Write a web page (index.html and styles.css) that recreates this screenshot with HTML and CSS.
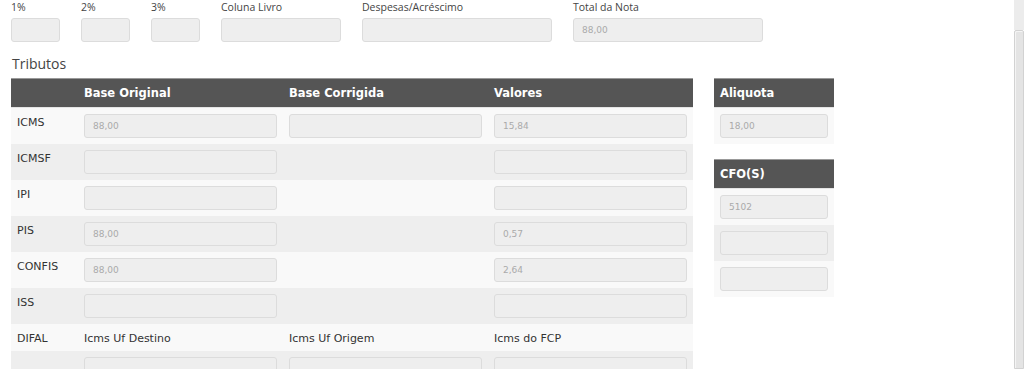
FILE: index.html
```html
<!DOCTYPE html>
<html lang="pt-BR">
<head>
  <meta charset="UTF-8">
  <title>Tributos</title>
  <meta name="viewport" content="width=device-width, initial-scale=1.0">
<link rel="stylesheet" href="styles.css">
</head>
<body>
  <div class="page">
    <div class="content">
      <div class="totais">
        <div class="campo w1">
          <label>1%</label>
          <input type="text" disabled>
        </div>
        <div class="campo w1">
          <label>2%</label>
          <input type="text" disabled>
        </div>
        <div class="campo w1">
          <label>3%</label>
          <input type="text" disabled>
        </div>
        <div class="campo w2">
          <label>Coluna Livro</label>
          <input type="text" disabled>
        </div>
        <div class="campo w3">
          <label>Despesas/Acréscimo</label>
          <input type="text" disabled>
        </div>
        <div class="campo w3">
          <label>Total da Nota</label>
          <input type="text" value="88,00" disabled>
        </div>
      </div>

      <h3 class="titulo">Tributos</h3>

      <div class="tributos">
        <table class="grade">
          <colgroup>
            <col class="c-label">
            <col class="c-campo">
            <col class="c-campo">
            <col class="c-campo">
          </colgroup>
          <thead>
            <tr>
              <th></th>
              <th>Base Original</th>
              <th>Base Corrigida</th>
              <th>Valores</th>
            </tr>
          </thead>
          <tbody>
            <tr>
              <td class="nome">ICMS</td>
              <td><input type="text" value="88,00" disabled></td>
              <td><input type="text" disabled></td>
              <td><input type="text" value="15,84" disabled></td>
            </tr>
            <tr>
              <td class="nome">ICMSF</td>
              <td><input type="text" disabled></td>
              <td></td>
              <td><input type="text" disabled></td>
            </tr>
            <tr>
              <td class="nome">IPI</td>
              <td><input type="text" disabled></td>
              <td></td>
              <td><input type="text" disabled></td>
            </tr>
            <tr>
              <td class="nome">PIS</td>
              <td><input type="text" value="88,00" disabled></td>
              <td></td>
              <td><input type="text" value="0,57" disabled></td>
            </tr>
            <tr>
              <td class="nome">CONFIS</td>
              <td><input type="text" value="88,00" disabled></td>
              <td></td>
              <td><input type="text" value="2,64" disabled></td>
            </tr>
            <tr>
              <td class="nome">ISS</td>
              <td><input type="text" disabled></td>
              <td></td>
              <td><input type="text" disabled></td>
            </tr>
            <tr class="sub">
              <td class="nome">DIFAL</td>
              <td>Icms Uf Destino</td>
              <td>Icms Uf Origem</td>
              <td>Icms do FCP</td>
            </tr>
            <tr>
              <td class="nome"></td>
              <td><input type="text" disabled></td>
              <td><input type="text" disabled></td>
              <td><input type="text" disabled></td>
            </tr>
          </tbody>
        </table>

        <div class="lateral">
          <table class="grade caixa">
            <thead>
              <tr><th>Aliquota</th></tr>
            </thead>
            <tbody>
              <tr><td><input type="text" value="18,00" disabled></td></tr>
            </tbody>
          </table>

          <table class="grade caixa">
            <thead>
              <tr><th>CFO(S)</th></tr>
            </thead>
            <tbody>
              <tr><td><input type="text" value="5102" disabled></td></tr>
              <tr><td><input type="text" disabled></td></tr>
              <tr><td><input type="text" disabled></td></tr>
            </tbody>
          </table>
        </div>
      </div>
    </div>

    <div class="rolagem">
      <div class="trilho"></div>
      <div class="barra"></div>
    </div>
  </div>
</body>
</html>
```

FILE: styles.css
```css
html,
body {
  margin: 0;
  padding: 0;
  height: 100%;
  overflow: hidden;
  background-color: #fff;
}

body {
  font-family: "DejaVu Sans", Verdana, sans-serif;
  font-size: 11px;
  color: #333;
}

.page {
  display: flex;
  height: 100%;
}

.content {
  flex: 1;
  padding: 0 11px;
}

input[type="text"] {
  display: block;
  width: 100%;
  height: 24px;
  box-sizing: border-box;
  margin: 0;
  padding: 0 8px;
  border: 1px solid #dcdcdc;
  border-radius: 3px;
  background-color: #eee;
  font-family: "DejaVu Sans", Verdana, sans-serif;
  font-size: 9px;
  color: #aaa;
  -webkit-text-fill-color: #aaa;
  opacity: 1;
}

/* campos do topo */
.totais {
  display: flex;
  gap: 21px;
}

.campo label {
  display: block;
  height: 14px;
  line-height: 14px;
  margin-bottom: 4px;
  font-family: "Open Sans", "Noto Sans", sans-serif;
  font-size: 10.5px;
  color: #444;
}

.w1 { width: 49px; }
.w2 { width: 120px; }
.w3 { width: 190px; }

.titulo {
  margin: 13px 0 5px 1px;
  height: 18px;
  line-height: 18px;
  font-family: "Open Sans", "Noto Sans", sans-serif;
  font-size: 14px;
  font-weight: normal;
  color: #444;
}

/* tabela de tributos */
.tributos {
  display: flex;
  align-items: flex-start;
  gap: 21px;
}

.grade {
  border-collapse: collapse;
  table-layout: fixed;
}

.grade > thead th {
  height: 28px;
  padding: 0 6px;
  border-top: 1px solid #999;
  background-color: #555;
  color: #fff;
  font-weight: bold;
  font-size: 11.5px;
  text-align: left;
}

.grade > tbody td {
  padding: 6px;
  vertical-align: top;
}

.grade > tbody tr:nth-child(odd) td {
  background-color: #f9f9f9;
}

.grade > tbody tr:nth-child(even) td {
  background-color: #eee;
}

.grade > tbody tr:first-child td {
  border-top: 1px solid #e4e4e4;
}

.grade > tbody td.nome {
  padding-top: 7px;
  line-height: 16px;
  color: #333;
}

.grade tr.sub td {
  padding: 7px 6px 5px;
  line-height: 15px;
  color: #333;
}

.c-label { width: 67px; }
.c-campo { width: 205px; }

.grade:not(.caixa) { width: 682px; }

.lateral {
  display: flex;
  flex-direction: column;
  gap: 15px;
}

.caixa {
  width: 120px;
}

/* barra de rolagem */
.rolagem {
  width: 10px;
  display: flex;
  flex-direction: column;
}

.trilho {
  height: 30px;
  background-color: #ececec;
}

.barra {
  flex: 1;
  box-sizing: border-box;
  border: 1px solid #d2d2d2;
  border-radius: 2px 2px 0 0;
  background-color: #e4e4e4;
  box-shadow: inset 1px 1px 0 #f4f4f4;
}
```
